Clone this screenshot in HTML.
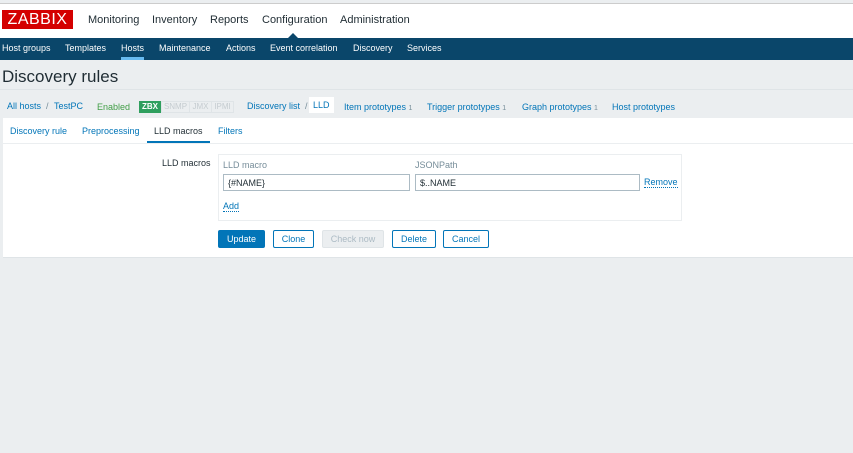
<!DOCTYPE html>
<html><head><style>
*{box-sizing:border-box;margin:0;padding:0}
body{width:853px;height:453px;background:#ebeef0;font-family:"Liberation Sans",Arial,sans-serif;font-size:9px;color:#1f2c33;position:relative;overflow:hidden}
.a{position:absolute;white-space:nowrap}
.top{position:absolute;left:0;top:3px;width:853px;height:35px;background:#fff;border-top:1px solid #ccc}
.logo{position:absolute;left:2px;top:10px;width:71px;height:19px;background:#d40000;color:#fff;font-size:16px;line-height:19px;text-align:center;letter-spacing:0.5px}
.mm{font-size:11px;color:#1f2c33;top:14px}
.nav{position:absolute;left:0;top:38px;width:853px;height:22px;background:#0a466a}
.nav span{position:absolute;top:5px;color:#fff;font-size:9px}
.blue{color:#0275b8}
.panel{position:absolute;left:3px;top:118px;width:850px;height:140px;background:#fff;border-bottom:1px solid #dfe4e7}
.inp{position:absolute;height:17px;border:1px solid #acbbc4;background:#fff;font-size:9px;padding:3px 4px;color:#1f2c33}
.btn{position:absolute;top:230px;height:18px;border:1px solid #0275b8;color:#0275b8;background:#fff;font-size:9px;text-align:center;line-height:16px;border-radius:2px}
.sb{position:absolute;top:101px;height:12px;border:1px solid #dfe4e7;color:#c5ccd0;font-size:8px;line-height:10px;text-align:center}
</style></head><body>
<div class="top"></div>
<div class="logo">ZABBIX</div>
<span class="a mm" style="left:88px">Monitoring</span>
<span class="a mm" style="left:152px">Inventory</span>
<span class="a mm" style="left:210px">Reports</span>
<span class="a mm" style="left:262px">Configuration</span>
<span class="a mm" style="left:340px">Administration</span>
<div class="a" style="left:288px;top:33px;width:0;height:0;border-left:5px solid transparent;border-right:5px solid transparent;border-bottom:5px solid #0a466a"></div>
<div class="nav">
<span style="left:2px">Host groups</span>
<span style="left:65px">Templates</span>
<span style="left:121px">Hosts</span>
<span style="left:159px">Maintenance</span>
<span style="left:226px">Actions</span>
<span style="left:270px">Event correlation</span>
<span style="left:353px">Discovery</span>
<span style="left:407px">Services</span>
</div>
<div class="a" style="left:121px;top:57px;width:23px;height:3px;background:#68bbf0"></div>
<span class="a" style="left:2px;top:67px;font-size:17px;color:#1f2c33">Discovery rules</span>
<div class="a" style="left:0;top:89px;width:853px;height:1px;background:#dfe4e7"></div>
<span class="a blue" style="left:7px;top:101px">All hosts</span>
<span class="a" style="left:46px;top:101px;color:#768d99">/</span>
<span class="a blue" style="left:54px;top:101px">TestPC</span>
<span class="a" style="left:97px;top:102px;color:#429e47">Enabled</span>
<span class="a" style="left:139px;top:101px;width:22px;height:12px;background:#2f9f5e;color:#fff;font-size:8px;line-height:12px;text-align:center;font-weight:bold">ZBX</span>
<span class="sb" style="left:161px;width:29px">SNMP</span>
<span class="sb" style="left:189px;width:23px">JMX</span>
<span class="sb" style="left:211px;width:23px">IPMI</span>
<span class="a blue" style="left:247px;top:101px">Discovery list</span>
<span class="a" style="left:305px;top:101px;color:#768d99">/</span>
<span class="a blue" style="left:309px;top:97px;background:#fff;padding:3px 4px">LLD</span>
<span class="a blue" style="left:344px;top:102px">Item prototypes <span style="color:#768d99;font-size:7px">1</span></span>
<span class="a blue" style="left:427px;top:102px">Trigger prototypes <span style="color:#768d99;font-size:7px">1</span></span>
<span class="a blue" style="left:522px;top:102px">Graph prototypes <span style="color:#768d99;font-size:7px">1</span></span>
<span class="a blue" style="left:612px;top:102px">Host prototypes</span>
<div class="panel"></div>
<span class="a blue" style="left:10px;top:126px">Discovery rule</span>
<span class="a blue" style="left:82px;top:126px">Preprocessing</span>
<span class="a" style="left:154px;top:126px">LLD macros</span>
<span class="a blue" style="left:218px;top:126px">Filters</span>
<div class="a" style="left:147px;top:141px;width:63px;height:2px;background:#0275b8"></div>
<div class="a" style="left:3px;top:143px;width:850px;height:1px;background:#ebeef0"></div>
<span class="a" style="left:162px;top:158px">LLD macros</span>
<div class="a" style="left:218px;top:154px;width:464px;height:67px;border:1px solid #ebeef0"></div>
<span class="a" style="left:223px;top:160px;color:#768d99">LLD macro</span>
<span class="a" style="left:415px;top:160px;color:#768d99">JSONPath</span>
<div class="inp" style="left:223px;top:174px;width:187px">{#NAME}</div>
<div class="inp" style="left:415px;top:174px;width:225px">$..NAME</div>
<span class="a blue" style="left:644px;top:177px;border-bottom:1px dotted #0275b8">Remove</span>
<span class="a blue" style="left:223px;top:201px;border-bottom:1px dotted #0275b8">Add</span>
<div class="btn" style="left:218px;width:47px;background:#0275b8;color:#fff">Update</div>
<div class="btn" style="left:273px;width:41px">Clone</div>
<div class="btn" style="left:322px;width:62px;border-color:#dfe4e7;background:#ebeef0;color:#acbbc4">Check now</div>
<div class="btn" style="left:392px;width:44px">Delete</div>
<div class="btn" style="left:443px;width:46px">Cancel</div>
</body></html>
